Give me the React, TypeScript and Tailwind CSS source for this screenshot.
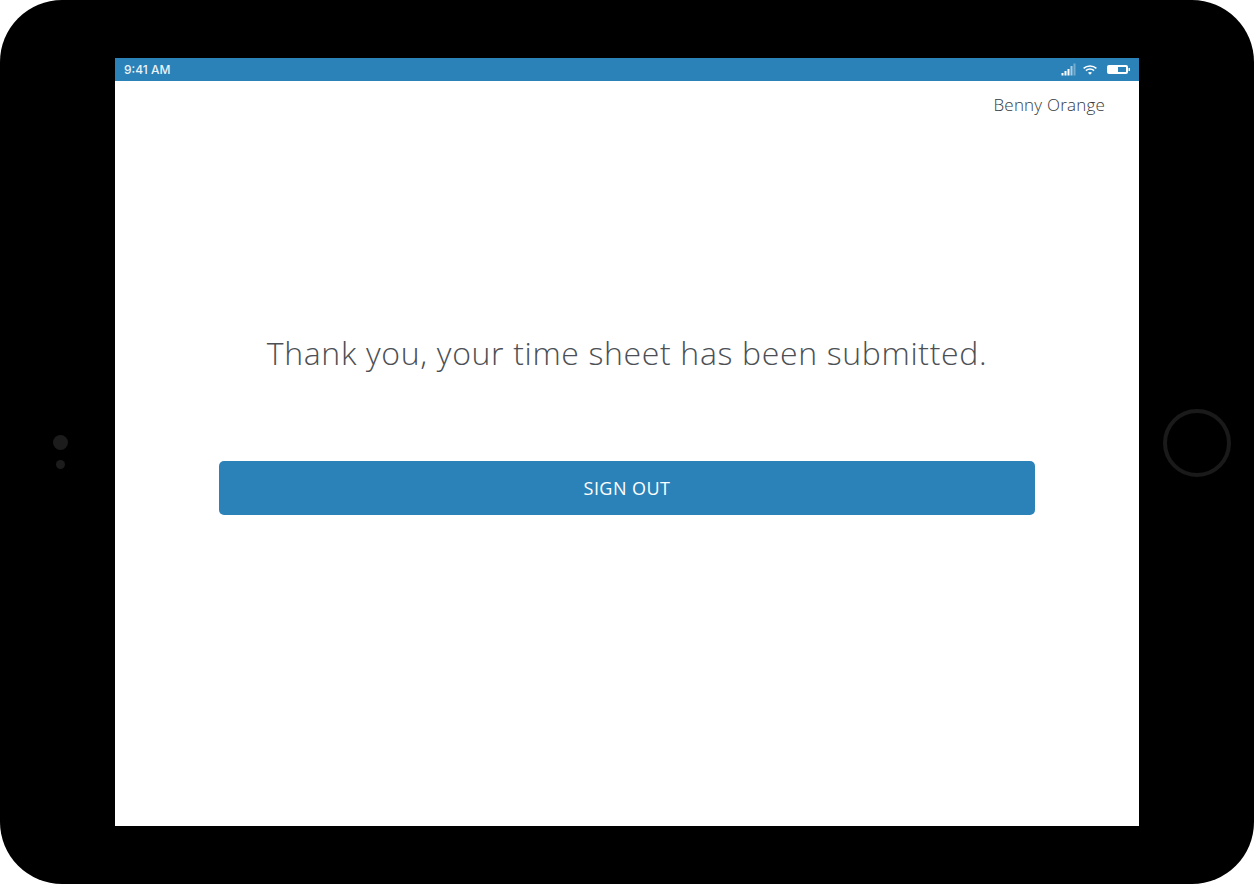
import React from "react";

function Signal() {
  return (
    <svg width="15" height="13" viewBox="0 0 15 13" className="block">
      <rect x="0.5" y="10" width="2" height="2.5" fill="#fff" />
      <rect x="3.5" y="8" width="2" height="4.5" fill="#fff" />
      <rect x="6.5" y="6" width="2" height="6.5" fill="#fff" />
      <rect x="9.5" y="3" width="2" height="9.5" fill="#fff" fillOpacity="0.6" />
      <rect x="12.5" y="0.5" width="2" height="12" fill="#fff" fillOpacity="0.35" />
    </svg>
  );
}

function Wifi() {
  return (
    <svg width="14" height="10" viewBox="0 0 14 10" className="block">
      <path d="M0.6 3.4C4.2 0.2 9.8 0.2 13.4 3.4" fill="none" stroke="#fff" strokeWidth="1.5" />
      <path d="M2.9 5.6C5.2 3.6 8.8 3.6 11.1 5.6" fill="none" stroke="#fff" strokeWidth="1.5" />
      <path d="M5 7.7C6.2 6.7 7.8 6.7 9 7.7L7 9.8Z" fill="#fff" />
    </svg>
  );
}

function Battery() {
  return (
    <svg width="23" height="9" viewBox="0 0 23 9" className="block">
      <rect x="0" y="0" width="21" height="9" rx="2" fill="#fff" />
      <rect x="11" y="2" width="8" height="5" fill="#2b82b8" />
      <rect x="21.5" y="3" width="1.5" height="3" fill="#fff" />
    </svg>
  );
}

export default function App() {
  return (
    <div className="w-[1254px] h-[884px] bg-white overflow-hidden">
      <div className="w-full h-full bg-black rounded-[62px] flex items-stretch">
        <div className="w-[115px] flex flex-col items-center justify-center gap-[10px] pl-[6px] pt-[19px]">
          <div className="w-[15px] h-[15px] rounded-full bg-[#1c1c1c]" />
          <div className="w-[9px] h-[9px] rounded-full bg-[#1c1c1c]" />
        </div>
        <div className="w-[1024px] my-[58px] bg-white flex flex-col">
          <div className="h-[23px] bg-[#2b82b8] flex items-center justify-between pl-[9px] pr-[9px]">
            <span className="font-['Inter',sans-serif] text-[12px] leading-none text-white font-medium opacity-90">9:41 AM</span>
            <div className="flex items-center">
              <Signal />
              <div className="ml-[7px]"><Wifi /></div>
              <div className="ml-[10px]"><Battery /></div>
            </div>
          </div>
          <div className="flex justify-end pr-[34px] pt-[12px] h-[54px]">
            <span className="font-['Open_Sans',sans-serif] font-light text-[17px] leading-[24px] text-[#33373b] tracking-[0.2px] opacity-[0.99]">Benny Orange</span>
          </div>
          <div className="pt-[196px] text-center">
            <h1 className="font-['Open_Sans',sans-serif] font-light text-[32px] leading-[44px] text-[#4a4e53] tracking-[0.65px] opacity-[0.99]">
              Thank you, your time sheet has been submitted.
            </h1>
          </div>
          <div className="px-[104px] pt-[86px]">
            <button className="w-full h-[54px] rounded-[5px] bg-[#2b82b8] text-white font-['Open_Sans',sans-serif] text-[18px] tracking-[0.45px]">
              SIGN OUT
            </button>
          </div>
        </div>
        <div className="w-[115px] flex items-center justify-end pr-[23px] pt-[2px]">
          <div className="w-[68px] h-[68px] rounded-full border-[4px] border-[#1a1a1a]" />
        </div>
      </div>
    </div>
  );
}
